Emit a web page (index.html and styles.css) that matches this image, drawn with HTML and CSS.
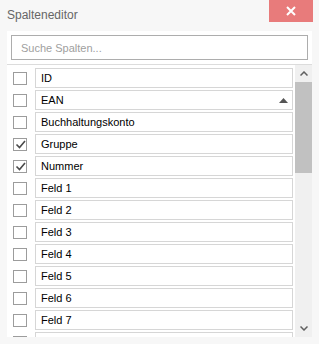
FILE: index.html
```html
<!DOCTYPE html>
<html lang="de">
<head>
  <meta charset="UTF-8" />
  <meta name="viewport" content="width=device-width, initial-scale=1.0"/>
  <title>Spalteneditor</title>
  <link rel="stylesheet" href="styles.css">
</head>
<body>

  <div class="titlebar">
    <div class="title">Spalteneditor</div>
    <button class="close">
      <svg width="10" height="10" viewBox="0 0 10 10"><path d="M1 1L9 9M9 1L1 9" stroke="#fff" stroke-width="2"/></svg>
    </button>
  </div>

  <div class="panel">
    <div class="search">
      <input type="text" placeholder="Suche Spalten...">
    </div>

    <div class="list">
      <div class="rows">
        <div class="row"><span class="check"></span><div class="field">ID</div></div>
        <div class="row"><span class="check"></span><div class="field">EAN
          <svg class="sort" width="9" height="5" viewBox="0 0 9 5"><path d="M4.5 0L9 5H0Z" fill="#555"/></svg></div></div>
        <div class="row"><span class="check"></span><div class="field">Buchhaltungskonto</div></div>
        <div class="row"><span class="check"><svg width="11" height="11" viewBox="0 0 11 11"><path d="M1.5 5.5L4.5 8.5L10 2" stroke="#4a4a4a" stroke-width="1.6" fill="none"/></svg></span><div class="field">Gruppe</div></div>
        <div class="row"><span class="check"><svg width="11" height="11" viewBox="0 0 11 11"><path d="M1.5 5.5L4.5 8.5L10 2" stroke="#4a4a4a" stroke-width="1.6" fill="none"/></svg></span><div class="field">Nummer</div></div>
        <div class="row"><span class="check"></span><div class="field">Feld 1</div></div>
        <div class="row"><span class="check"></span><div class="field">Feld 2</div></div>
        <div class="row"><span class="check"></span><div class="field">Feld 3</div></div>
        <div class="row"><span class="check"></span><div class="field">Feld 4</div></div>
        <div class="row"><span class="check"></span><div class="field">Feld 5</div></div>
        <div class="row"><span class="check"></span><div class="field">Feld 6</div></div>
        <div class="row"><span class="check"></span><div class="field">Feld 7</div></div>
        <div class="row"><span class="check"></span><div class="field"></div></div>
      </div>

      <div class="scrollbar">
        <div class="sb-btn">
          <svg width="8" height="5" viewBox="0 0 8 5"><path d="M0.5 4.5L4 1L7.5 4.5" stroke="#606060" stroke-width="1.5" fill="none"/></svg>
        </div>
        <div class="sb-thumb"></div>
        <div class="sb-track"></div>
        <div class="sb-btn">
          <svg width="8" height="5" viewBox="0 0 8 5"><path d="M0.5 0.5L4 4L7.5 0.5" stroke="#606060" stroke-width="1.5" fill="none"/></svg>
        </div>
      </div>
    </div>
  </div>

</body>
</html>
```

FILE: styles.css
```css
* { box-sizing: border-box; margin: 0; padding: 0; }
body {
  font-family: 'Liberation Sans', Arial, sans-serif;
  background: #f7f7f7;
  color: #000;
  width: 319px;
  height: 344px;
  overflow: hidden;
}
.titlebar {
  display: flex;
  justify-content: space-between;
  align-items: flex-start;
  height: 31px;
  padding: 0 6px 0 7px;
}
.title {
  padding-top: 8px;
  font-size: 12px;
  line-height: 14px;
  color: #666;
}
.close {
  width: 44px;
  height: 22px;
  border: none;
  background: #e87b7b;
  display: flex;
  align-items: center;
  justify-content: center;
}
.panel {
  margin: 0 7px;
  height: 306px;
  background: #fff;
  display: flex;
  flex-direction: column;
}
.search {
  padding: 4px;
}
.search input {
  display: block;
  width: 100%;
  height: 25px;
  border: 1px solid #adadad;
  padding: 0 9px;
  font-family: inherit;
  font-size: 11px;
  color: #000;
  outline: none;
}
.search input::placeholder {
  color: #a0a0a0;
}
.list {
  flex: 1;
  display: flex;
  border-top: 1px solid #dcdcdc;
  overflow: hidden;
}
.rows {
  flex: 1;
  padding: 3px 2px 0 6px;
  overflow: hidden;
}
.row {
  display: flex;
  align-items: center;
  gap: 8px;
  margin-bottom: 2px;
}
.check {
  flex: none;
  width: 14px;
  height: 13px;
  border: 1px solid #9c9c9c;
  background: #fff;
  display: flex;
  align-items: center;
  justify-content: center;
}
.field {
  flex: 1;
  height: 20px;
  display: flex;
  align-items: center;
  border: 1px solid #d6d6d6;
  padding: 0 4px 0 5px;
  font-size: 11px;
  line-height: 18px;
}
.sort {
  margin-left: auto;
}
.scrollbar {
  width: 17px;
  flex: none;
  display: flex;
  flex-direction: column;
  background: #f0f0f0;
}
.sb-btn {
  height: 17px;
  flex: none;
  display: flex;
  align-items: center;
  justify-content: center;
}
.sb-thumb {
  height: 91px;
  flex: none;
  background: #c1c1c1;
}
.sb-track {
  flex: 1;
}
```
